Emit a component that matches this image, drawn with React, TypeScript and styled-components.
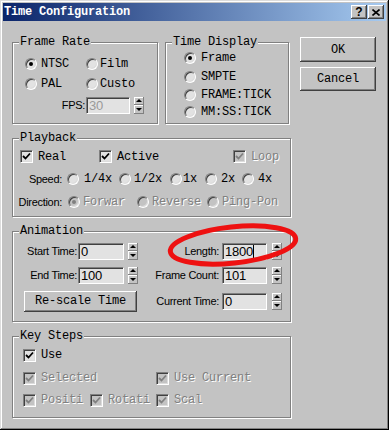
import React from "react";
import styled, { createGlobalStyle } from "styled-components";

const FACE = "#c3c3c3";
const SHADOW = "#808080";
const DARK = "#404040";
const LIGHT = "#ffffff";
const FIELD = "#e2e2e2";
const MONO = `"Liberation Mono", "DejaVu Sans Mono", monospace`;
const SANS = `"Liberation Sans", Arial, sans-serif`;

const GlobalStyle = createGlobalStyle`
  html, body { margin: 0; padding: 0; background: ${FACE}; }
  * { box-sizing: border-box; }
`;

const Window = styled.div`
  position: relative;
  width: 389px;
  height: 430px;
  padding: 3px;
  background: ${FACE};
  box-shadow: inset -1px -1px 0 #000, inset 1px 1px 0 #dcdcdc,
    inset -2px -2px 0 ${SHADOW}, inset 2px 2px 0 ${LIGHT};
  display: flex;
  flex-direction: column;
  overflow: hidden;
`;

const TitleBar = styled.div`
  height: 18px;
  display: flex;
  align-items: center;
  padding: 0 2px 0 1px;
  background: linear-gradient(to right, #0a246a, #a6caf0);
`;

const Title = styled.span`
  flex: 1;
  color: #fff;
  font: bold 12px ${MONO};
  letter-spacing: -0.2px;
`;

const CaptionButton = styled.div<{ $gap?: number }>`
  width: 16px;
  height: 14px;
  margin-left: ${(p) => p.$gap ?? 0}px;
  display: flex;
  align-items: center;
  justify-content: center;
  background: ${FACE};
  box-shadow: inset -1px -1px 0 ${DARK}, inset 1px 1px 0 ${LIGHT},
    inset -2px -2px 0 ${SHADOW};
  font: bold 12px ${SANS};
  color: #000;
`;

const Body = styled.div`
  flex: 1;
  display: flex;
  padding: 16px 0 0 9px;
`;

const LeftCol = styled.div`
  width: 279px;
  padding-top: 5px;
  display: flex;
  flex-direction: column;
  gap: 14px;
`;

const TopRow = styled.div`
  display: flex;
  gap: 7px;
`;

const RightCol = styled.div`
  margin-left: 9px;
  display: flex;
  flex-direction: column;
  gap: 5px;
`;

const Group = styled.div<{ $w?: number; $h: number }>`
  width: ${(p) => (p.$w ? `${p.$w}px` : "100%")};
  height: ${(p) => p.$h}px;
  border: 1px solid ${SHADOW};
  box-shadow: inset 1px 1px 0 ${LIGHT}, 1px 1px 0 ${LIGHT};
  display: flex;
  flex-direction: column;
`;

const Legend = styled.div`
  align-self: flex-start;
  margin: -8px 0 0 6px;
  padding: 0 1px;
  height: 14px;
  line-height: 14px;
  background: ${FACE};
  font: 12px ${MONO};
  letter-spacing: -0.2px;
  color: #000;
  white-space: nowrap;
`;

const Row = styled.div<{ $h: number; $pl?: number; $mt?: number }>`
  height: ${(p) => p.$h}px;
  padding-left: ${(p) => p.$pl ?? 0}px;
  margin-top: ${(p) => p.$mt ?? 0}px;
  display: flex;
  align-items: center;
  flex-shrink: 0;
`;

const Cell = styled.div<{ $w?: number; $ml?: number }>`
  width: ${(p) => (p.$w ? `${p.$w}px` : "auto")};
  margin-left: ${(p) => p.$ml ?? 0}px;
  flex-shrink: 0;
  display: flex;
  align-items: center;
`;

const Text = styled.span<{ $off?: boolean; $gap?: number }>`
  margin-left: ${(p) => p.$gap ?? 4}px;
  font: 12px ${MONO};
  letter-spacing: -0.2px;
  line-height: 14px;
  white-space: nowrap;
  color: ${(p) => (p.$off ? SHADOW : "#000")};
  text-shadow: ${(p) => (p.$off ? `1px 1px 0 ${LIGHT}` : "none")};
`;

const Label = styled.span<{ $w: number }>`
  width: ${(p) => p.$w}px;
  flex-shrink: 0;
  text-align: right;
  font: 11px ${SANS};
  letter-spacing: -0.3px;
  color: #000;
  white-space: nowrap;
`;

const RadioDot = styled.span<{ $on?: boolean; $off?: boolean }>`
  width: 12px;
  height: 12px;
  flex-shrink: 0;
  border-radius: 50%;
  background: ${(p) => (p.$off ? FACE : FIELD)};
  border: 1px solid;
  border-color: ${SHADOW} ${LIGHT} ${LIGHT} ${SHADOW};
  box-shadow: inset 1px 1px 0 ${DARK}, inset -1px -1px 0 #dcdcdc;
  display: flex;
  align-items: center;
  justify-content: center;
  &::after {
    content: "";
    width: 4px;
    height: 4px;
    border-radius: 50%;
    background: ${(p) => (p.$off ? SHADOW : "#000")};
    display: ${(p) => (p.$on ? "block" : "none")};
  }
`;

const CheckBox = styled.span<{ $off?: boolean }>`
  width: 13px;
  height: 13px;
  flex-shrink: 0;
  background: ${(p) => (p.$off ? FACE : FIELD)};
  border: 1px solid;
  border-color: ${SHADOW} ${LIGHT} ${LIGHT} ${SHADOW};
  box-shadow: inset 1px 1px 0 ${DARK}, inset -1px -1px 0 #dcdcdc;
  display: flex;
  align-items: center;
  justify-content: center;
  svg {
    display: block;
  }
`;

const Field = styled.div<{ $w: number; $ml?: number }>`
  width: ${(p) => p.$w}px;
  height: 17px;
  margin-left: ${(p) => p.$ml ?? 0}px;
  flex-shrink: 0;
  background: ${FIELD};
  border: 1px solid;
  border-color: ${SHADOW} ${LIGHT} ${LIGHT} ${SHADOW};
  box-shadow: inset 1px 1px 0 ${DARK};
  padding: 0 2px;
  display: flex;
  align-items: center;
`;

const FieldText = styled.span<{ $off?: boolean }>`
  font: 13px ${SANS};
  letter-spacing: -0.2px;
  color: ${(p) => (p.$off ? "#9a9a9a" : "#000")};
`;

const Caret = styled.span`
  width: 1px;
  height: 13px;
  background: #000;
`;

const Spinner = styled.div<{ $ml?: number }>`
  width: 10px;
  height: 17px;
  margin-left: ${(p) => p.$ml ?? 4}px;
  flex-shrink: 0;
  display: flex;
  flex-direction: column;
`;

const SpinHalf = styled.div<{ $down?: boolean }>`
  flex: 1;
  display: flex;
  align-items: center;
  justify-content: center;
  background: ${FACE};
  box-shadow: inset -1px -1px 0 ${SHADOW}, inset 1px 1px 0 ${LIGHT};
  &::after {
    content: "";
    width: 0;
    height: 0;
    border-left: 3px solid transparent;
    border-right: 3px solid transparent;
    ${(p) =>
      p.$down ? "border-top: 3px solid #000;" : "border-bottom: 3px solid #000;"}
  }
`;

const PushButton = styled.div<{ $w: number; $h: number; $ml?: number }>`
  width: ${(p) => p.$w}px;
  height: ${(p) => p.$h}px;
  margin-left: ${(p) => p.$ml ?? 0}px;
  flex-shrink: 0;
  display: flex;
  align-items: center;
  justify-content: center;
  background: ${FACE};
  box-shadow: inset -1px -1px 0 ${DARK}, inset 1px 1px 0 ${LIGHT},
    inset -2px -2px 0 ${SHADOW};
  font: 12px ${MONO};
  letter-spacing: -0.2px;
  color: #000;
`;

const Mark = styled.svg`
  position: absolute;
  left: 0;
  top: 0;
  pointer-events: none;
`;

function Radio({
  label,
  on,
  off,
  gap,
}: {
  label: string;
  on?: boolean;
  off?: boolean;
  gap?: number;
}) {
  return (
    <>
      <RadioDot $on={on} $off={off} />
      <Text $off={off} $gap={gap}>
        {label}
      </Text>
    </>
  );
}

function Check({ label, off }: { label: string; off?: boolean }) {
  return (
    <>
      <CheckBox $off={off}>
        <svg width="9" height="9" viewBox="0 0 9 9">
          <path
            d="M1 4 L3.5 6.5 L8 1.5"
            fill="none"
            stroke={off ? SHADOW : "#000"}
            strokeWidth="1.8"
          />
        </svg>
      </CheckBox>
      <Text $off={off} $gap={5}>
        {label}
      </Text>
    </>
  );
}

function Spin({ ml }: { ml?: number }) {
  return (
    <Spinner $ml={ml}>
      <SpinHalf />
      <SpinHalf $down />
    </Spinner>
  );
}

export default function App() {
  return (
    <Window>
      <GlobalStyle />
      <TitleBar>
        <Title>Time Configuration</Title>
        <CaptionButton>?</CaptionButton>
        <CaptionButton $gap={1}>
          <svg width="8" height="7" viewBox="0 0 8 7">
            <path d="M0.5 0.5 L7.5 6.5 M7.5 0.5 L0.5 6.5" stroke="#000" strokeWidth="1.6" />
          </svg>
        </CaptionButton>
      </TitleBar>

      <Body>
        <LeftCol>
          <TopRow>
            <Group $w={146} $h={82}>
              <Legend>Frame Rate</Legend>
              <Row $h={20} $pl={12} $mt={5}>
                <Cell $w={61}>
                  <Radio label="NTSC" on />
                </Cell>
                <Cell>
                  <Radio label="Film" gap={2} />
                </Cell>
              </Row>
              <Row $h={20} $pl={12}>
                <Cell $w={61}>
                  <Radio label="PAL" />
                </Cell>
                <Cell>
                  <Radio label="Custo" gap={2} />
                </Cell>
              </Row>
              <Row $h={22} $pl={12}>
                <Label $w={60}>FPS:</Label>
                <Field $w={44} $ml={1}>
                  <FieldText $off>30</FieldText>
                </Field>
                <Spin ml={4} />
              </Row>
            </Group>

            <Group $w={124} $h={82}>
              <Legend>Time Display</Legend>
              <Row $h={18} $pl={18}>
                <Radio label="Frame" on gap={5} />
              </Row>
              <Row $h={19} $pl={18}>
                <Radio label="SMPTE" gap={5} />
              </Row>
              <Row $h={17} $pl={18}>
                <Radio label="FRAME:TICK" gap={5} />
              </Row>
              <Row $h={17} $pl={18}>
                <Radio label="MM:SS:TICK" gap={5} />
              </Row>
            </Group>
          </TopRow>

          <Group $h={79}>
            <Legend>Playback</Legend>
            <Row $h={23} $pl={7}>
              <Cell $w={79}>
                <Check label="Real" />
              </Cell>
              <Cell $w={134}>
                <Check label="Active" />
              </Cell>
              <Cell>
                <Check label="Loop" off />
              </Cell>
            </Row>
            <Row $h={22}>
              <Label $w={49}>Speed:</Label>
              <Cell $w={52} $ml={5}>
                <Radio label="1/4x" gap={5} />
              </Cell>
              <Cell $w={51}>
                <Radio label="1/2x" gap={3} />
              </Cell>
              <Cell $w={35}>
                <Radio label="1x" gap={1} />
              </Cell>
              <Cell $w={37}>
                <Radio label="2x" gap={4} />
              </Cell>
              <Cell>
                <Radio label="4x" gap={4} />
              </Cell>
            </Row>
            <Row $h={23}>
              <Label $w={49}>Direction:</Label>
              <Cell $w={69} $ml={6}>
                <Radio label="Forwar" on off gap={3} />
              </Cell>
              <Cell $w={70}>
                <Radio label="Reverse" off gap={3} />
              </Cell>
              <Cell>
                <Radio label="Ping-Pon" off gap={3} />
              </Cell>
            </Row>
          </Group>

          <Group $h={91}>
            <Legend>Animation</Legend>
            <Row $h={26}>
              <Cell $w={125}>
                <Label $w={64}>Start Time:</Label>
                <Field $w={46} $ml={1}>
                  <FieldText>0</FieldText>
                </Field>
                <Spin />
              </Cell>
              <Label $w={81}>Length:</Label>
              <Field $w={45} $ml={3}>
                <FieldText>1800</FieldText>
                <Caret />
              </Field>
              <Spin ml={5} />
            </Row>
            <Row $h={22}>
              <Cell $w={125}>
                <Label $w={64}>End Time:</Label>
                <Field $w={46} $ml={1}>
                  <FieldText>100</FieldText>
                </Field>
                <Spin />
              </Cell>
              <Label $w={81}>Frame Count:</Label>
              <Field $w={45} $ml={3}>
                <FieldText>101</FieldText>
              </Field>
              <Spin ml={5} />
            </Row>
            <Row $h={30}>
              <Cell $w={125}>
                <PushButton $w={113} $h={21} $ml={11}>
                  Re-scale Time
                </PushButton>
              </Cell>
              <Label $w={81}>Current Time:</Label>
              <Field $w={45} $ml={3}>
                <FieldText>0</FieldText>
              </Field>
              <Spin ml={5} />
            </Row>
          </Group>

          <Group $h={82}>
            <Legend>Key Steps</Legend>
            <Row $h={24} $pl={10}>
              <Check label="Use" />
            </Row>
            <Row $h={22} $pl={10}>
              <Cell $w={133}>
                <Check label="Selected" off />
              </Cell>
              <Cell>
                <Check label="Use Current" off />
              </Cell>
            </Row>
            <Row $h={22} $pl={10}>
              <Cell $w={67}>
                <Check label="Positi" off />
              </Cell>
              <Cell $w={66}>
                <Check label="Rotati" off />
              </Cell>
              <Cell>
                <Check label="Scal" off />
              </Cell>
            </Row>
          </Group>
        </LeftCol>

        <RightCol>
          <PushButton $w={76} $h={25}>OK</PushButton>
          <PushButton $w={76} $h={24}>Cancel</PushButton>
        </RightCol>
      </Body>

      <Mark width="389" height="430" viewBox="0 0 389 430">
        <ellipse
          cx="233"
          cy="245"
          rx="63"
          ry="18"
          transform="rotate(-6 233 245)"
          fill="none"
          stroke="#ee1111"
          strokeWidth="5"
        />
      </Mark>
    </Window>
  );
}
